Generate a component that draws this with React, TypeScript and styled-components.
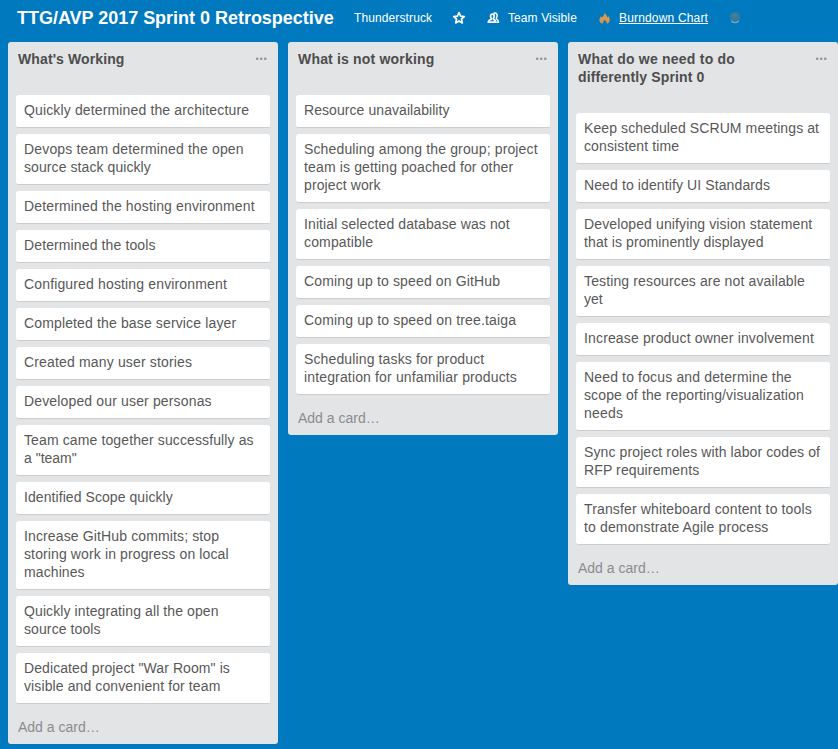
import React from "react";
import styled, { createGlobalStyle } from "styled-components";

const GlobalStyle = createGlobalStyle`
  * { box-sizing: border-box; }
  html, body { margin: 0; background: #0079bf; overflow: hidden; }
  body {
    font-family: "Liberation Sans", Arial, Helvetica, sans-serif;
    font-size: 14px;
    line-height: 18px;
    color: #4d4d4d;
  }
`;

const Board = styled.div`
  width: 838px;
  height: 749px;
  background: #0079bf;
  overflow: hidden;
`;

const Header = styled.header`
  height: 42px;
  padding: 9px 0 0 17px;
  display: flex;
  align-items: flex-start;
  color: #fff;
`;

const BoardTitle = styled.h1`
  margin: 0;
  width: 337px;
  font-size: 18px;
  line-height: 18px;
  font-weight: 700;
  letter-spacing: -0.02px;
  white-space: nowrap;
`;

const HeaderItem = styled.span<{ $width: number; $spacing?: number }>`
  flex: none;
  width: ${(p) => p.$width}px;
  font-size: 12px;
  line-height: 18px;
  letter-spacing: ${(p) => p.$spacing ?? 0}px;
  white-space: nowrap;
`;

const HeaderLink = styled.a`
  text-decoration: underline;
`;

const IconSlot = styled.span<{ $width: number }>`
  flex: none;
  width: ${(p) => p.$width}px;
  height: 18px;
  display: flex;
  align-items: center;

  svg { display: block; }
`;

const Lists = styled.main`
  display: flex;
  align-items: flex-start;
  gap: 10px;
  padding-left: 8px;
`;

const List = styled.section`
  flex: none;
  width: 270px;
  padding: 8px;
  background: #e2e4e6;
  border-radius: 3px;
`;

const ListHeader = styled.div`
  display: flex;
  justify-content: space-between;
  padding: 0 3px 27px 2px;
`;

const ListTitle = styled.h2`
  margin: 0;
  font-size: 14px;
  line-height: 18px;
  font-weight: 700;
`;

const Cards = styled.div`
  display: flex;
  flex-direction: column;
  gap: 6px;
`;

const Card = styled.article`
  padding: 6px 0 8px 8px;
  color: #585858;
  background: #fff;
  border-bottom: 1px solid #ccc;
  border-radius: 3px;
`;

const Line = styled.div<{ $spacing: number }>`
  white-space: nowrap;
  letter-spacing: ${(p) => p.$spacing}px;
`;

const AddCard = styled.div`
  padding: 14px 2px 0;
  color: #8c8c8c;
`;

const Star = () => (
  <svg width="14" height="14" viewBox="0 0 14 14" fill="none" stroke="#fff" strokeWidth="1.7" strokeLinejoin="round">
    <path d="M7 1.6 8.6 5.1 12.3 5.5 9.5 8 10.3 11.9 7 9.9 3.7 11.9 4.5 8 1.7 5.5 5.4 5.1Z" />
  </svg>
);

const Team = () => (
  <svg width="13" height="12" viewBox="0 0 13 12" fill="none" stroke="#fff" strokeLinejoin="round">
    <path strokeWidth="1.7" d="M5.4 2.2C6.700 2.200 7.200 3.100 7.200 4.200 7.200 5.300 6.800 6 6.300 6.500L6.500 7.400C8.100 7.900 8.700 8.600 8.800 10.100H1.200C1.500 8.600 2.200 7.900 4.200 7.400L4.400 6.500C3.900 6 3.600 5.300 3.600 4.200 3.600 3.100 4.100 2.200 5.400 2.200Z" />
    <path strokeWidth="1.5" d="M6.600 1.300C8.800.3 10.200 1.600 10.100 3.700 10.100 4.900 9.700 5.600 9.300 6.100L9.500 7.100C11 7.700 11.500 8.700 11.600 10.200H9.500" />
  </svg>
);

const Flame = () => (
  <svg width="12" height="12" viewBox="-1 0 12 13" preserveAspectRatio="none" fill="#d9974b">
    <path d="M5.6.2C6 2.4 8.3 3.2 8.4 5.9 9 5.6 9.200 5 9.200 4.300 10.400 5.700 11 7.300 10.700 9.200 10.500 11 9.400 12.200 7.700 12.700 8.200 10.900 7 9.700 5.500 8.400 5.500 9.900 3.300 10.700 3.700 12.700 1.600 12.200.3 10.700.4 8.700.5 7 1.400 6 1.700 4.600 2.300 5 2.600 5.400 2.800 6 4.400 4.600 5.600 2.700 5.600.2Z" />
  </svg>
);

const Orb = () => (
  <svg width="12" height="14" viewBox="0 0 12 14">
    <ellipse cx="6" cy="8.800" rx="4.200" ry="3.500" fill="#6fa9c4" />
    <circle cx="6" cy="6" r="5" fill="#39799b" />
    <ellipse cx="5.500" cy="4.300" rx="3.300" ry="2.100" fill="#467e99" />
  </svg>
);

const Dots = () => (
  <svg width="11" height="18" viewBox="0 0 11 18" fill="#999">
    <rect x="0" y="7.500" width="2.500" height="2.500" rx=".7" />
    <rect x="4" y="7.500" width="2.500" height="2.500" rx=".7" />
    <rect x="8" y="7.500" width="2.500" height="2.500" rx=".7" />
  </svg>
);

// A line of text and its letter spacing in pixels.
type TextLine = [string, number];
interface ListData { title: TextLine[]; cards: TextLine[][] }

const lists: ListData[] = [
  {
    title: [["What's Working", 0.11]],
    cards: [
      [["Quickly determined the architecture", 0.14]],
      [["Devops team determined the open", 0.16], ["source stack quickly", 0.08]],
      [["Determined the hosting environment", 0.15]],
      [["Determined the tools", 0.12]],
      [["Configured hosting environment", 0.15]],
      [["Completed the base service layer", 0.14]],
      [["Created many user stories", 0.16]],
      [["Developed our user personas", 0.15]],
      [["Team came together successfully as", 0.12], ['a "team"', 0]],
      [["Identified Scope quickly", 0.07]],
      [["Increase GitHub commits; stop", 0.13], ["storing work in progress on local", 0.12], ["machines", 0.1]],
      [["Quickly integrating all the open", 0.1], ["source tools", 0.1]],
      [['Dedicated project "War Room" is', 0.09], ["visible and convenient for team", 0.11]],
    ],
  },
  {
    title: [["What is not working", 0.18]],
    cards: [
      [["Resource unavailability", 0.07]],
      [["Scheduling among the group; project", 0.14], ["team is getting poached for other", 0.14], ["project work", 0.1]],
      [["Initial selected database was not", 0.1], ["compatible", 0.15]],
      [["Coming up to speed on GitHub", 0.14]],
      [["Coming up to speed on tree.taiga", 0.16]],
      [["Scheduling tasks for product", 0.13], ["integration for unfamiliar products", 0.15]],
    ],
  },
  {
    title: [["What do we need to do", 0.22], ["differently Sprint 0", 0.14]],
    cards: [
      [["Keep scheduled SCRUM meetings at", 0.1], ["consistent time", 0.12]],
      [["Need to identify UI Standards", 0.11]],
      [["Developed unifying vision statement", 0.12], ["that is prominently displayed", 0.1]],
      [["Testing resources are not available", 0.13], ["yet", 0]],
      [["Increase product owner involvement", 0.15]],
      [["Need to focus and determine the", 0.15], ["scope of the reporting/visualization", 0.12], ["needs", 0.2]],
      [["Sync project roles with labor codes of", 0.11], ["RFP requirements", 0.12]],
      [["Transfer whiteboard content to tools", 0.14], ["to demonstrate Agile process", 0.14]],
    ],
  },
];

const Lines = ({ lines }: { lines: TextLine[] }) => (
  <>
    {lines.map(([text, spacing]) => (
      <Line key={text} $spacing={spacing}>{text}</Line>
    ))}
  </>
);

export default function App() {
  return (
    <Board>
      <GlobalStyle />
      <Header>
        <BoardTitle>TTG/AVP 2017 Sprint 0 Retrospective</BoardTitle>
        <HeaderItem $width={98} $spacing={0.11}>Thunderstruck</HeaderItem>
        <IconSlot $width={35}><Star /></IconSlot>
        <IconSlot $width={21}><Team /></IconSlot>
        <HeaderItem $width={90} $spacing={0.09}>Team Visible</HeaderItem>
        <IconSlot $width={21}><Flame /></IconSlot>
        <HeaderItem $width={110} $spacing={0.17}><HeaderLink>Burndown Chart</HeaderLink></HeaderItem>
        <IconSlot $width={12}><Orb /></IconSlot>
      </Header>
      <Lists>
        {lists.map((list) => (
          <List key={list.title[0][0]}>
            <ListHeader>
              <ListTitle><Lines lines={list.title} /></ListTitle>
              <Dots />
            </ListHeader>
            <Cards>
              {list.cards.map((card) => (
                <Card key={card[0][0]}><Lines lines={card} /></Card>
              ))}
            </Cards>
            <AddCard>Add a card…</AddCard>
          </List>
        ))}
      </Lists>
    </Board>
  );
}
